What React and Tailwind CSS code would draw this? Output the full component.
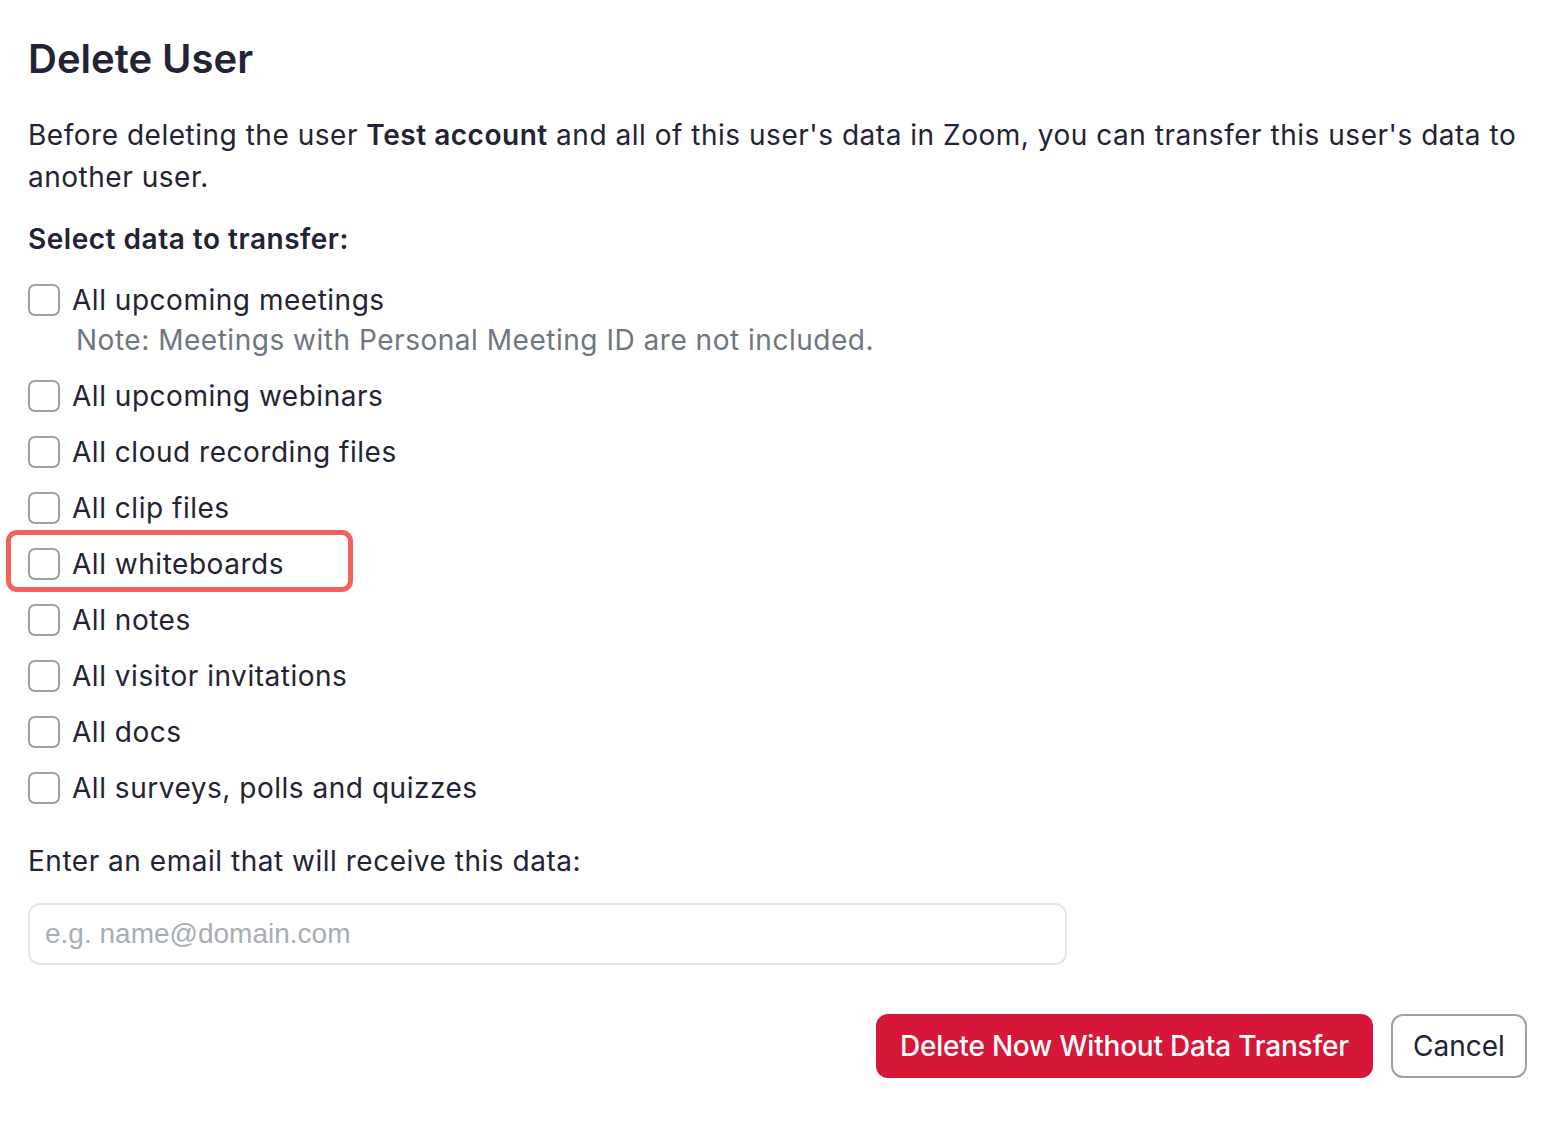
const items = [
  "All upcoming webinars",
  "All cloud recording files",
  "All clip files",
  "All whiteboards",
  "All notes",
  "All visitor invitations",
  "All docs",
  "All surveys, polls and quizzes",
];

function Box() {
  return (
    <span className="block w-[32px] h-[32px] shrink-0 rounded-[7px] border-2 border-[#9da1a5] bg-white" />
  );
}

function Row({ label }) {
  return (
    <div className="relative flex items-center h-[56px] gap-[12px]">
      {label === "All whiteboards" && (
        <div className="absolute left-[-22px] top-[-6px] w-[347px] h-[62px] rounded-[11px] border-[5px] border-[#f4605a]" />
      )}
      <Box />
      <span className="relative">{label}</span>
    </div>
  );
}

export default function App() {
  return (
    <div
      className="min-h-[1124px] bg-white px-[28px] pt-[35px] text-[#232333] tracking-[0.52px]"
      style={{ fontFamily: "Inter, 'Noto Sans', sans-serif" }}
    >
      <h1 className="text-[40px] leading-[48px] font-semibold tracking-normal">Delete User</h1>

      <p className="mt-[31px] text-[28px] leading-[42px]">
        Before deleting the user <b className="font-semibold">Test account</b> and all of this user's data in Zoom, you can transfer this user's data to another user.
      </p>

      <p className="mt-[20px] text-[28px] leading-[42px] font-semibold">Select data to transfer:</p>

      <div className="mt-[16px] text-[28px]">
        <div className="flex items-center h-[48px] gap-[12px]">
          <Box />
          <span>All upcoming meetings</span>
        </div>
        <div className="pl-[48px] leading-[32px] text-[#6e7680]">
          Note: Meetings with Personal Meeting ID are not included.
        </div>
        <div className="mt-[12px]">
          {items.map((it) => (
            <Row key={it} label={it} />
          ))}
        </div>
      </div>

      <p className="mt-[24px] text-[28px] leading-[42px]">Enter an email that will receive this data:</p>

      <div className="mt-[21px] w-[1039px] h-[62px] rounded-[12px] border-2 border-[#e4e6e9] flex items-center px-[15px]">
        <span className="text-[28px] text-[#a8adb3] tracking-normal" style={{ fontFamily: "'Liberation Sans', Arial, sans-serif" }}>
          e.g. name@domain.com
        </span>
      </div>

      <div className="mt-[49px] mr-[-7px] flex justify-end gap-[18px]">
        <button className="h-[64px] px-[24px] rounded-[12px] bg-[#d7173a] text-white text-[28px] font-medium tracking-[-0.2px]">
          Delete Now Without Data Transfer
        </button>
        <button className="h-[64px] w-[136px] rounded-[12px] border-2 border-[#9ba1a6] bg-white text-[28px] tracking-normal">
          Cancel
        </button>
      </div>
    </div>
  );
}
